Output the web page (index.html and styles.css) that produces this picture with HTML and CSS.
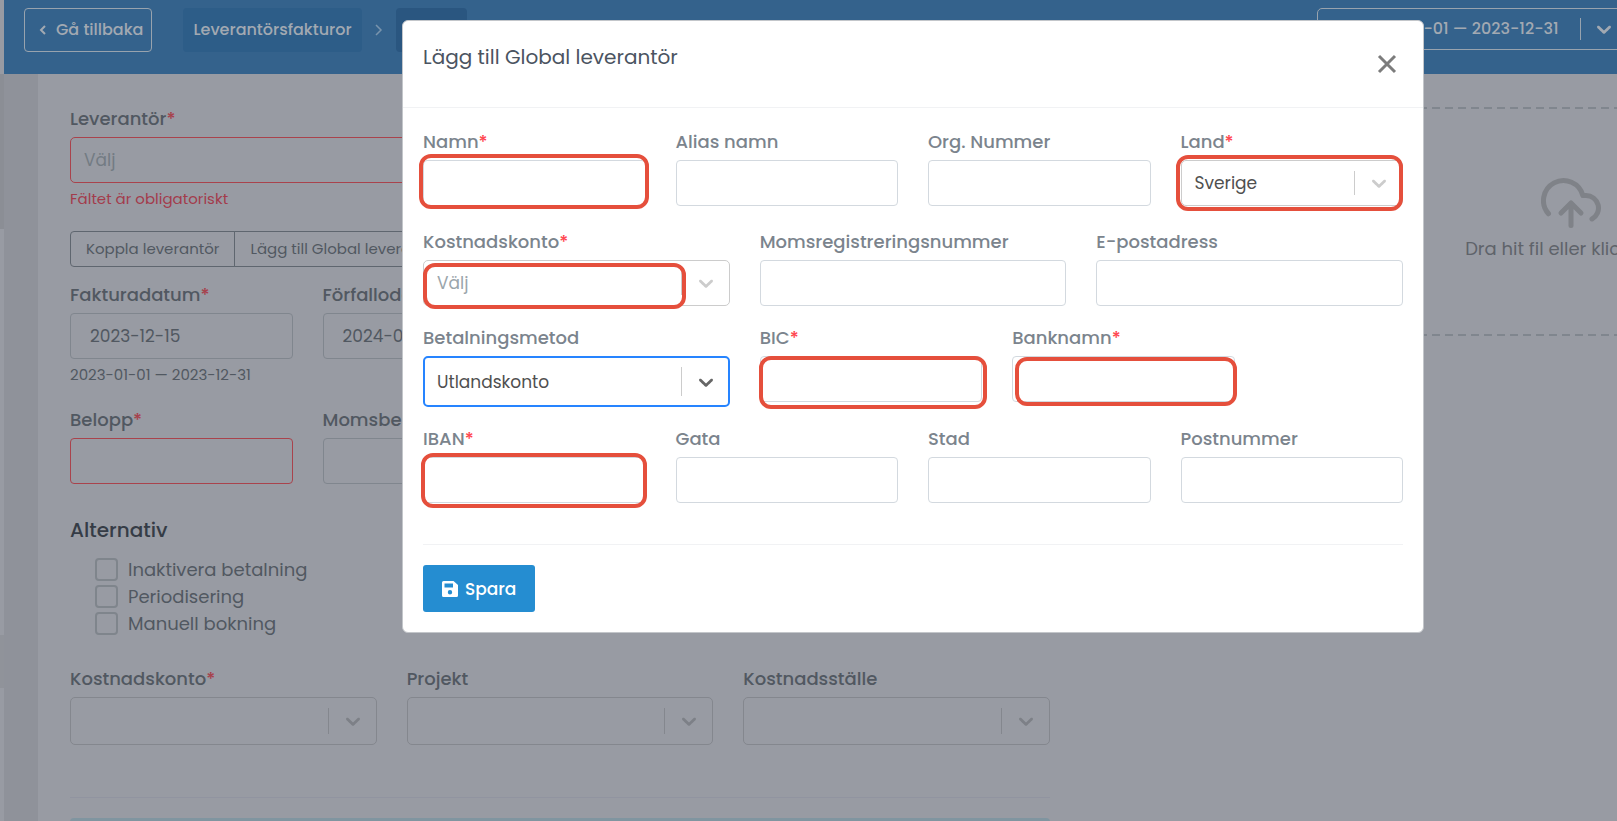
FILE: index.html
```html
<!DOCTYPE html>
<html lang="sv">
<head>
<meta charset="utf-8">
<title>Lägg till Global leverantör</title>
<link rel="stylesheet" href="styles.css">
</head>
<body>
<svg class="defs" aria-hidden="true">
  <symbol id="chevron" viewBox="0 0 20 20"><path d="M4.516 7.548c0.436-0.446 1.043-0.481 1.576 0l3.908 3.747 3.908-3.747c0.533-0.481 1.141-0.446 1.574 0 0.436 0.445 0.408 1.197 0 1.615-0.406 0.418-4.695 4.502-4.695 4.502-0.217 0.223-0.502 0.335-0.787 0.335s-0.57-0.112-0.789-0.335c0 0-4.287-4.084-4.695-4.502s-0.436-1.17 0-1.615z"/></symbol>
</svg>
<div class="app">
  <aside class="rail"></aside>
  <div class="page">
    <header class="topbar">
      <button class="back" type="button">
        <svg width="8" height="12" viewBox="0 0 8 12"><path d="M6 2 2 6l4 4" fill="none" stroke="currentColor" stroke-width="2"/></svg>
        Gå tillbaka
      </button>
      <nav class="crumbs">
        <a class="crumb" href="#">Leverantörsfakturor</a>
        <svg class="crumb-sep" width="8" height="12" viewBox="0 0 8 12"><path d="M1 1l5 5-5 5" fill="none" stroke="currentColor" stroke-width="1.5"/></svg>
        <a class="crumb current" href="#">Skapa</a>
      </nav>
      <div class="select period">
        <select aria-label="Räkenskapsår"><option>2023-01-01 — 2023-12-31</option></select>
        <svg class="chevron" width="24" height="24"><use href="#chevron"/></svg>
      </div>
    </header>
    <main class="content">
      <form class="invoice">
        <div class="field">
          <label for="lev">Leverantör<b>*</b></label>
          <div class="select error placeholder"><select id="lev"><option>Välj</option></select><svg class="chevron" width="24" height="24"><use href="#chevron"/></svg></div>
          <p class="hint invalid">Fältet är obligatoriskt</p>
        </div>
        <div class="button-group">
          <button type="button">Koppla leverantör</button>
          <button type="button">Lägg till Global leverantör</button>
        </div>
        <div class="row quarters">
          <div class="field">
            <label for="fdat">Fakturadatum<b>*</b></label>
            <input class="date" id="fdat" type="text" value="2023-12-15">
            <p class="hint">2023-01-01 — 2023-12-31</p>
          </div>
          <div class="field">
            <label for="ffdat">Förfallodatum<b>*</b></label>
            <input class="date" id="ffdat" type="text" value="2024-01-14">
          </div>
        </div>
        <div class="row quarters amounts">
          <div class="field"><label for="bel">Belopp<b>*</b></label><input class="error" id="bel" type="text"></div>
          <div class="field"><label for="moms">Momsbelopp</label><input id="moms" type="text"></div>
        </div>
        <h2>Alternativ</h2>
        <ul class="options">
          <li><input type="checkbox" id="o1"><label for="o1">Inaktivera betalning</label></li>
          <li><input type="checkbox" id="o2"><label for="o2">Periodisering</label></li>
          <li><input type="checkbox" id="o3"><label for="o3">Manuell bokning</label></li>
        </ul>
        <div class="row thirds costs">
          <div class="field"><label for="kk">Kostnadskonto<b>*</b></label><div class="select"><select id="kk"></select><svg class="chevron" width="24" height="24"><use href="#chevron"/></svg></div></div>
          <div class="field"><label for="pr">Projekt</label><div class="select"><select id="pr"></select><svg class="chevron" width="24" height="24"><use href="#chevron"/></svg></div></div>
          <div class="field"><label for="ks">Kostnadsställe</label><div class="select"><select id="ks"></select><svg class="chevron" width="24" height="24"><use href="#chevron"/></svg></div></div>
        </div>
        <div class="rule"></div>
        <div class="notice"></div>
      </form>
      <section class="dropzone">
        <svg width="60" height="60" viewBox="0 0 24 24" fill="none" stroke="currentColor" stroke-width="2" stroke-linecap="round" stroke-linejoin="round"><path d="M16 16l-4-4-4 4M12 12v9"/><path d="M20.390 18.390A5 5 0 0 0 18 9h-1.260A8 8 0 1 0 3 16.300"/></svg>
        <p>Dra hit fil eller klicka här</p>
      </section>
    </main>
  </div>
</div>

<div class="overlay">
  <form class="modal" role="dialog" aria-labelledby="title">
    <header class="modal-head">
      <h1 id="title">Lägg till Global leverantör</h1>
      <button class="close" type="button" aria-label="Stäng"><svg width="20" height="20" viewBox="0 0 20 20"><path d="M2 2l16 16M18 2 2 18" stroke="currentColor" stroke-width="3"/></svg></button>
    </header>
    <div class="modal-body">
      <div class="grid">
        <div class="field"><label for="namn">Namn<b>*</b></label><div class="control"><input id="namn" type="text"><span class="mark mark-name"></span></div></div>
        <div class="field"><label for="alias">Alias namn</label><input id="alias" type="text"></div>
        <div class="field"><label for="org">Org. Nummer</label><input id="org" type="text"></div>
        <div class="field"><label for="land">Land<b>*</b></label><div class="select"><select id="land"><option>Sverige</option></select><svg class="chevron" width="24" height="24"><use href="#chevron"/></svg><span class="mark mark-country"></span></div></div>
      </div>
      <div class="grid">
        <div class="field wide"><label for="konto">Kostnadskonto<b>*</b></label><div class="select placeholder"><select id="konto"><option>Välj</option></select><svg class="chevron" width="24" height="24"><use href="#chevron"/></svg><span class="mark mark-account"></span></div></div>
        <div class="field wide"><label for="vat">Momsregistreringsnummer</label><input id="vat" type="text"></div>
        <div class="field wide"><label for="mail">E-postadress</label><input id="mail" type="email"></div>
      </div>
      <div class="grid">
        <div class="field wide"><label for="metod">Betalningsmetod</label><div class="select focused"><select id="metod"><option>Utlandskonto</option></select><svg class="chevron" width="24" height="24"><use href="#chevron"/></svg></div></div>
        <div class="field"><label for="bic">BIC<b>*</b></label><div class="control"><input id="bic" type="text"><span class="mark mark-bic"></span></div></div>
        <div class="field"><label for="bank">Banknamn<b>*</b></label><div class="control"><input id="bank" type="text"><span class="mark mark-bank"></span></div></div>
      </div>
      <div class="grid">
        <div class="field"><label for="iban">IBAN<b>*</b></label><div class="control"><input id="iban" type="text"><span class="mark mark-iban"></span></div></div>
        <div class="field"><label for="gata">Gata</label><input id="gata" type="text"></div>
        <div class="field"><label for="stad">Stad</label><input id="stad" type="text"></div>
        <div class="field"><label for="post">Postnummer</label><input id="post" type="text"></div>
      </div>
      <footer class="modal-foot">
        <button class="save" type="submit">
          <svg width="16" height="16" viewBox="0 0 16 16"><path fill="currentColor" fill-rule="evenodd" d="M1.500 0H11.500L16 4V14.500A1.500 1.500 0 0 1 14.500 16H1.500A1.500 1.500 0 0 1 0 14.500V1.500A1.500 1.500 0 0 1 1.500 0ZM2.500 2.500V6.500H11V2.500ZM8 9a2.200 2.200 0 1 0 0 4.400A2.200 2.200 0 0 0 8 9Z"/></svg>
          Spara
        </button>
      </footer>
    </div>
  </form>
</div>
</body>
</html>
```
FILE: styles.css
```css
* { box-sizing: border-box; }

body {
  margin: 0;
  overflow: hidden;
  background: #989ba3;
  color: #515861;
  font: 16px/24px Poppins, Inter, "Open Sans", sans-serif;
}

h1, h2, p, ul { margin: 0; padding: 0; }
button, input, select { font: inherit; color: inherit; }
.defs { position: absolute; width: 0; height: 0; }

/* Shared fields */
.field { min-width: 0; }
.field > label {
  display: block;
  margin-bottom: 6px;
  font-size: 18px;
  font-weight: 500;
  white-space: nowrap;
}
.field b { color: #a7414c; font-weight: 500; }
.field input {
  display: block;
  width: 100%;
  height: 46px;
  padding: 0 14px;
  border: 1px solid #80868e;
  border-radius: 4px;
  background: transparent;
}
.field .date { padding: 0 19px; }
.field input, .field select { font-size: 17px; }
.control, .select { position: relative; }
.select select {
  display: block;
  width: 100%;
  height: 48px;
  padding: 0 60px 0 13px;
  border: 1px solid #84878e;
  border-radius: 5px;
  background: transparent;
  appearance: none;
}
.select::after {
  content: "";
  position: absolute;
  top: 11px;
  bottom: 11px;
  right: 48px;
  width: 1px;
  background: #84878e;
}
.chevron {
  position: absolute;
  top: 50%;
  right: 12px;
  margin-top: -12px;
  fill: #7d8087;
  pointer-events: none;
}
.field .error, .field .error select { border-color: #a9434c; }
.error select { height: 46px; }
.placeholder select { color: #737b83; }
.hint { padding-top: 4px; font-size: 15px; }
.invalid { color: #a33c4c; }

/* Page */
.app { display: flex; min-height: 100vh; }
.rail {
  flex: none;
  width: 4px;
  background: linear-gradient(#989ba3 74px, #8b8e95 74px 229px, #989ba3 229px 635px, #90939a 635px 688px, #989ba3 688px);
}
.page { flex: 1; min-width: 0; }
.topbar {
  display: flex;
  align-items: flex-start;
  height: 74px;
  margin-right: -9px;
  padding: 8px 0 0 20px;
  background: #34628c;
  color: #a2a9b2;
  font-weight: 500;
}
.back {
  display: flex;
  align-items: center;
  gap: 9px;
  height: 44px;
  padding: 0 8px 0 14px;
  border: 1px solid #98a3ae;
  border-radius: 4px;
  background: none;
}
.crumbs { display: flex; align-items: center; margin-left: 31px; }
.crumb {
  height: 44px;
  padding: 0 10px;
  border-radius: 4px;
  background: #2d5d88;
  color: inherit;
  line-height: 44px;
  text-decoration: none;
}
.crumb-sep { margin: 0 13px; color: #7994ad; }
.crumb.current { background: #2a5680; color: #8496a8; }
.period { width: 309px; margin-left: auto; }
.period select {
  height: 42px;
  padding-left: 42px;
  border-color: #98a3ae;
}
.period::after { top: 10px; bottom: 10px; right: 45px; background: #98a3ae; }
.period .chevron { right: 10px; fill: #a2a9b2; }

.content {
  display: flex;
  gap: 31px;
  min-height: calc(100vh - 74px);
  padding: 33px 0 0 32px;
  border-left: 34px solid #8f929a;
}
.invoice { flex: none; width: 980px; }
.row { display: grid; column-gap: 30px; }
.quarters { grid-template-columns: repeat(4, 1fr); }
.thirds { grid-template-columns: repeat(3, 1fr); }
.button-group { display: flex; margin: 20px 0 16px; }
.button-group button {
  height: 36px;
  padding: 0 15px;
  border: 1px solid #5f666f;
  border-radius: 4px 0 0 4px;
  background: none;
  font-size: 15px;
}
.button-group button + button { margin-left: -1px; border-radius: 0 4px 4px 0; }
.amounts { margin-top: 21px; }
.invoice h2 {
  margin: 34px 0 14px;
  color: #353c46;
  font-size: 20px;
  font-weight: 500;
  line-height: 24px;
}
.options { padding-left: 25px; list-style: none; font-size: 18px; }
.options li { display: flex; align-items: center; gap: 10px; height: 27px; }
.options input {
  width: 23px;
  height: 23px;
  margin: 0;
  border: 2px solid #7f858c;
  border-radius: 4px;
  appearance: none;
}
.costs { margin-top: 30px; }
.rule { height: 1px; margin: 52px 0 20px; background: #9194a0; }
.notice { height: 60px; border-radius: 4px; background: #8095a0; }
.dropzone {
  display: flex;
  flex: none;
  flex-direction: column;
  align-items: center;
  gap: 4px;
  width: 980px;
  height: 229px;
  padding-top: 66px;
  background:
    repeating-linear-gradient(90deg, #80868e 0 8px, transparent 8px 13px) top / 100% 2px no-repeat,
    repeating-linear-gradient(90deg, #80868e 0 8px, transparent 8px 13px) bottom / 100% 2px no-repeat;
  color: #5f636a;
  font-size: 18px;
}
.dropzone svg { color: #7f8288; }

/* Dialog */
.overlay {
  position: absolute;
  inset: 0;
  padding: 20px 193px 20px 402px;
}
.modal {
  border: 1px solid #c3c6ca;
  border-radius: 6px;
  background: #fff;
  color: #505050;
}
.modal-head {
  display: flex;
  justify-content: space-between;
  align-items: flex-start;
  height: 87px;
  padding: 24px 26px 0 20px;
  border-bottom: 1px solid #f1f2f4;
}
.modal-head h1 { color: #4b5461; font-size: 20px; font-weight: 400; line-height: 24px; }
.close {
  display: flex;
  padding: 9px 0 0;
  border: 0;
  background: none;
  color: #7c7c7c;
}
.modal-body { padding: 22px 20px 20px; }
.grid {
  display: grid;
  grid-template-columns: repeat(12, 1fr);
  column-gap: 30px;
  margin-bottom: 24px;
}
.grid:nth-child(n + 2) { margin-bottom: 20px; }
.grid .field { grid-column: span 3; }
.grid .wide { grid-column: span 4; }
.grid label { color: #7b848d; }
.modal .field b { color: #ff4650; }
.modal .field input { border-color: #d3d9df; }
.modal .select select { height: 46px; border-color: #ccc; }
.modal .select::after { background: #ccc; }
.modal .chevron { fill: #ccc; }
.modal .placeholder select { color: #9aa5ab; }
.modal .focused select { height: 51px; padding-left: 12px; border: 2px solid #2684ff; }
.modal .focused .chevron { fill: #666; }
.mark {
  position: absolute;
  z-index: 1;
  border: 4px solid #e54f3c;
  border-radius: 12px;
  pointer-events: none;
}
.mark-name { inset: -6px -3px -3px -4px; }
.mark-country { inset: -5px 0 -5px -5px; }
.mark-account { inset: 3px 44px -3px 0; }
.mark-bic { inset: 0 -5px -7px -1px; }
.mark-bank { inset: 1px -2px -4px 3px; }
.mark-iban { inset: -4px -1px -5px -2px; }
.modal-foot { margin-top: 41px; padding-top: 20px; border-top: 1px solid #f1f2f4; }
.save {
  display: flex;
  align-items: center;
  gap: 7px;
  height: 47px;
  padding: 0 19px;
  border: 0;
  border-radius: 3px;
  background: #258dd1;
  color: #fff;
  font-size: 17px;
  font-weight: 500;
}
```
